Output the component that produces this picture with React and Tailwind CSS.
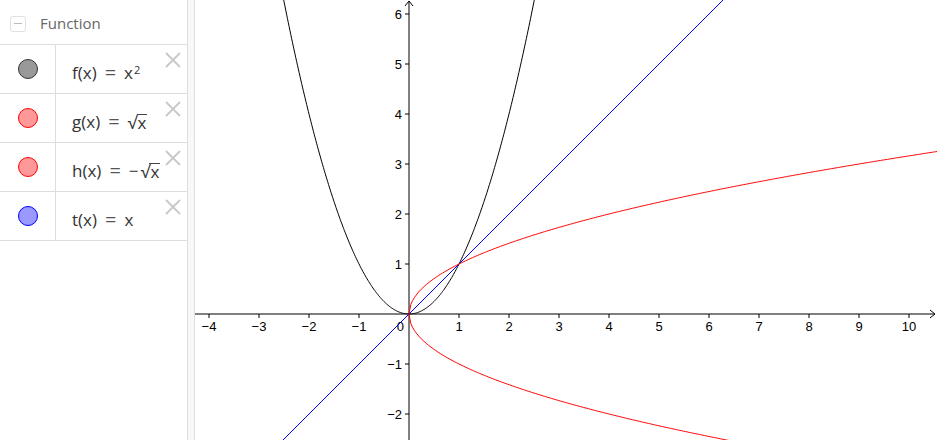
const rows = [
  { fill: "bg-[#999999]", border: "border-[#333333]", label: "f", expr: <>x<sup className="text-[11px] relative -top-[3px] ml-[1px]">2</sup></> },
  { fill: "bg-[#ff9999]", border: "border-[#ff0000]", label: "g", expr: <Sqrt /> },
  { fill: "bg-[#ff9999]", border: "border-[#ff0000]", label: "h", expr: <><span className="mr-[2px]">−</span><Sqrt /></> },
  { fill: "bg-[#9999ff]", border: "border-[#0000ff]", label: "t", expr: <>x</> },
];

function Sqrt() {
  return (
    <span className="inline-flex items-baseline">
      <span className="text-[18px]">√</span>
      <span className="inline-block border-t border-[#444] leading-[16px] -ml-[1px] px-[1px]">x</span>
    </span>
  );
}

function CloseIcon() {
  return (
    <svg width="16" height="16" viewBox="0 0 16 16" className="absolute right-[6px] top-[7px]">
      <path d="M1 1 L15 15 M15 1 L1 15" stroke="#c8c8c8" strokeWidth="1.8" fill="none" />
    </svg>
  );
}

const W = 742;
const H = 440;
const OX = 214;
const OY = 314;
const U = 50;

const px = (x) => OX + x * U;
const py = (y) => OY - y * U;

function curve(fn, x0, x1, n = 300) {
  let d = "";
  for (let i = 0; i <= n; i++) {
    const x = x0 + ((x1 - x0) * i) / n;
    d += (i ? "L" : "M") + px(x).toFixed(2) + " " + py(fn(x)).toFixed(2) + " ";
  }
  return d;
}

function Graph() {
  const xMax = (W - OX) / U;
  const yTop = OY / U;
  const yBot = -(H - OY) / U;
  const xt = [-4, -3, -2, -1, 1, 2, 3, 4, 5, 6, 7, 8, 9, 10];
  const yt = [-2, -1, 1, 2, 3, 4, 5, 6];
  const sq = (x) => Math.sqrt(Math.max(0, x));
  return (
    <svg width={W} height={H} className="block" style={{ fontFamily: "'Liberation Sans', Arial, sans-serif" }}>
      {/* axes */}
      <line x1="0" y1={OY} x2={W - 2} y2={OY} stroke="#000" strokeWidth="1" />
      <path d={`M${W - 7} ${OY - 4} L${W - 2} ${OY} L${W - 7} ${OY + 4}`} stroke="#000" fill="none" />
      <line x1={OX} y1={H} x2={OX} y2="1" stroke="#000" strokeWidth="1" />
      <path d={`M${OX - 4} 6 L${OX} 1 L${OX + 4} 6`} stroke="#000" fill="none" />
      {xt.map((k) => (
        <g key={"x" + k}>
          <line x1={px(k)} y1={OY} x2={px(k)} y2={OY + 4} stroke="#000" />
          <text x={px(k)} y={OY + 17} fontSize="13" textAnchor="middle" fill="#000">
            {k < 0 ? "−" + -k : k}
          </text>
        </g>
      ))}
      {yt.map((k) => (
        <g key={"y" + k}>
          <line x1={OX - 4} y1={py(k)} x2={OX} y2={py(k)} stroke="#000" />
          <text x={OX - 7} y={py(k) + 4.5} fontSize="13" textAnchor="end" fill="#000">
            {k < 0 ? "−" + -k : k}
          </text>
        </g>
      ))}
      <text x={OX - 5} y={OY + 17} fontSize="13" textAnchor="end" fill="#000">0</text>
      {/* curves */}
      <path d={curve((x) => x * x, -Math.sqrt(yTop) - 0.01, Math.sqrt(yTop) + 0.01)} stroke="#000" fill="none" strokeWidth="1" />
      <path d={curve((x) => x, yBot, yTop, 2)} stroke="#0000ff" fill="none" strokeWidth="1" />
      <path d={`M${OX} ${OY} ` + curve((x) => sq(x), 0, xMax).slice(1)} stroke="#ff0000" fill="none" strokeWidth="1" />
      <path d={curve((x) => -sq(x), 0, xMax)} stroke="#ff0000" fill="none" strokeWidth="1" />
    </svg>
  );
}

export default function App() {
  return (
    <div className="w-[937px] h-[440px] flex bg-white overflow-hidden" style={{ fontFamily: "'Open Sans', 'DejaVu Sans', sans-serif" }}>
      <div className="w-[187px] shrink-0 flex flex-col">
        <div className="h-[45px] flex items-center pl-[10px] pt-[3px] gap-[14px] border-b border-[#dddddd]">
          <span className="w-[16px] h-[16px] border border-[#e0e0e0] rounded-[3px] flex items-center justify-center">
            <span className="w-[8px] h-[1px] bg-[#bbbbbb]" />
          </span>
          <span className="text-[15px] text-[#666666]">Function</span>
        </div>
        {rows.map((r) => (
          <div key={r.label} className="h-[49px] flex border-b border-[#dddddd] relative">
            <div className="w-[56px] shrink-0 border-r border-[#dddddd] flex items-center justify-center pb-[1px]">
              <span className={`w-[20px] h-[20px] rounded-full border ${r.fill} ${r.border}`} />
            </div>
            <div className="flex items-center pl-[16px] pt-[8px] text-[17px] text-[#333333] whitespace-nowrap">
              {r.label}(x)<span className="mx-[8px] text-[#555] text-[20px] leading-none">=</span>{r.expr}
            </div>
            <CloseIcon />
          </div>
        ))}
      </div>
      <div className="w-[8px] shrink-0 bg-[#f8f8f8] border-l border-r border-[#dddddd]" />
      <div className="flex-1">
        <Graph />
      </div>
    </div>
  );
}
